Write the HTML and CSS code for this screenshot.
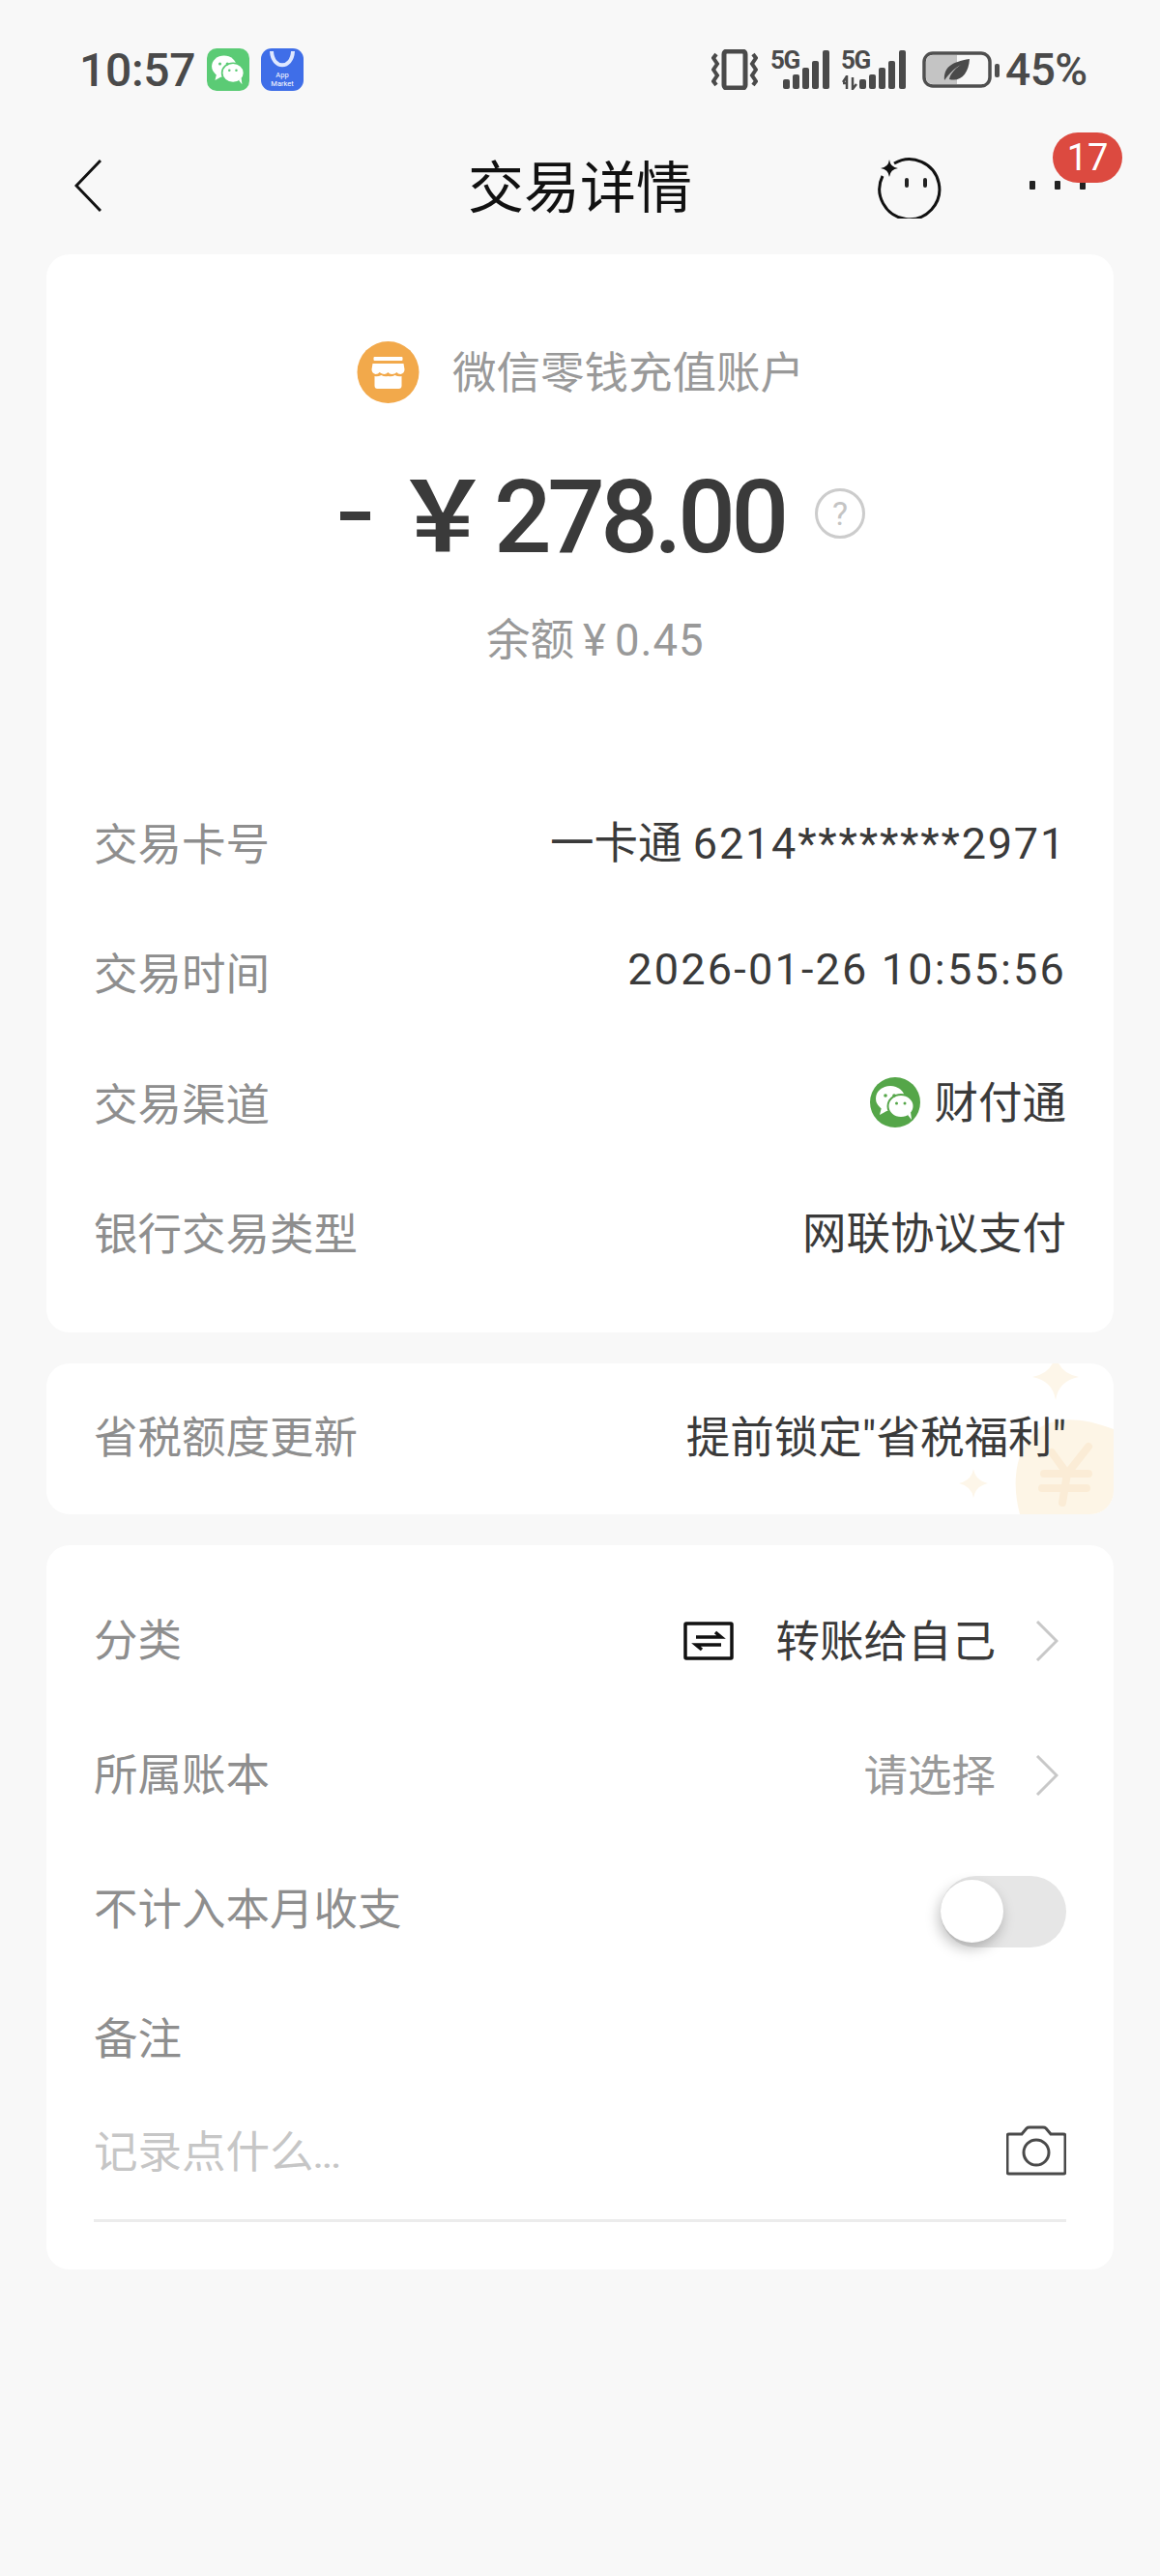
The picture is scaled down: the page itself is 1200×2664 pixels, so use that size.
FILE: index.html
```html
<!DOCTYPE html>
<html lang="zh-CN">
<head>
<meta charset="utf-8">
<title>交易详情</title>
<link rel="stylesheet" href="styles.css">
</head>
<body>
<svg class="defs" width="0" height="0" aria-hidden="true">
  <symbol id="wechat" viewBox="0 0 52 52">
    <ellipse cx="21" cy="22" rx="15" ry="13" fill="#fff"/>
    <path d="M12 31l-2 8 9-5z" fill="#fff"/>
    <ellipse cx="32" cy="30" rx="13.500" ry="12" fill="#fff" stroke="currentColor" stroke-width="2"/>
    <path d="M39 39l4 5-1-8z" fill="#fff"/>
    <circle cx="16" cy="19" r="1.800" fill="currentColor"/>
    <circle cx="25" cy="19" r="1.800" fill="currentColor"/>
    <circle cx="27.500" cy="27" r="1.500" fill="currentColor"/>
    <circle cx="36" cy="27" r="1.500" fill="currentColor"/>
  </symbol>
  <symbol id="signal" viewBox="0 0 48 40">
    <rect x="0" y="30" width="7" height="10" rx="2"/>
    <rect x="10" y="25" width="7" height="15" rx="2"/>
    <rect x="20" y="18" width="7" height="22" rx="2"/>
    <rect x="30" y="11" width="7" height="29" rx="2"/>
    <rect x="41" y="0" width="7" height="40" rx="2"/>
  </symbol>
  <symbol id="chevron" viewBox="0 0 24 42">
    <path d="M2 1l20 20L2 41" fill="none" stroke="#c8c8c8" stroke-width="3"/>
  </symbol>
</svg>

<div class="phone">
  <header class="status">
    <div class="status-left">
      <span class="time">10:57</span>
      <svg class="notif wechat-notif" viewBox="0 0 52 52"><rect width="52" height="52" rx="12" fill="#5bcb75"/><use href="#wechat" width="52" height="52"/></svg>
      <svg class="notif" viewBox="0 0 44 44"><rect width="44" height="44" rx="11" fill="#3f6ee8"/><path d="M11 3c1 19 21 19 22 0" fill="none" stroke="#dfe8ff" stroke-width="4"/><text x="22" y="30" class="mkt">App</text><text x="22" y="39" class="mkt">Market</text></svg>
    </div>
    <div class="status-right">
      <svg class="ico-vib" viewBox="0 0 48 42" fill="none" stroke="#4a4a4a"><rect x="13" y="2" width="22" height="38" rx="3" stroke-width="5"/><path d="M5 5L2 9l4 6-4 6 4 6-4 6 3 4M43 5l3 4-4 6 4 6-4 6 4 6-3 4" stroke-width="4"/></svg>
      <span class="net">
        <span class="net-5g">5G</span>
        <svg class="net-bars" viewBox="0 0 48 40" fill="#4a4a4a"><use href="#signal"/></svg>
      </span>
      <span class="net">
        <span class="net-5g">5G</span>
        <svg class="net-arrow" viewBox="0 0 16 16" fill="none" stroke="#4a4a4a" stroke-width="2.500"><path d="M5 1v14M1 8l4-6M1 9h5M11 3v12l4-5"/></svg>
        <svg class="net-bars" viewBox="0 0 48 40" fill="#4a4a4a"><use href="#signal"/></svg>
      </span>
      <svg class="battery" viewBox="0 0 80 38"><rect x="2" y="2" width="68" height="34" rx="9" fill="none" stroke="#4f4f4f" stroke-width="3.500"/><path d="M4 11q0-7 7-7h25v30H11q-7 0-7-7z" fill="#c4c4c4"/><rect x="75" y="13" width="5" height="14" rx="2" fill="#4f4f4f"/><path d="M23 30c-1-13 7-19 26-22-1 15-9 24-21 21 1-6 7-12 12-15-6 3-12 9-17 16z" fill="#4a4a4a"/></svg>
      <span class="pct">45%</span>
    </div>
  </header>

  <nav class="nav">
    <svg class="back" viewBox="0 0 28 54" fill="none" stroke="#111" stroke-width="3"><path d="M27 1L2 27l25 26"/></svg>
    <h1 class="title">交易详情</h1>
    <div class="nav-actions">
      <svg class="face" viewBox="0 0 68 68" fill="none"><path d="M17 11A31 31 0 1 1 5 24" stroke="#111" stroke-width="3"/><path d="M12 7q1 8 9 9-8 1-9 9-1-8-9-9 8-1 9-9z" fill="#111"/><rect x="28" y="26" width="4" height="10" rx="2" fill="#222"/><rect x="47" y="26" width="4" height="10" rx="2" fill="#222"/></svg>
      <div class="more">
        <i></i><i></i><i></i>
        <span class="badge">17</span>
      </div>
    </div>
  </nav>

  <main class="content">
    <section class="card card-main">
      <div class="account">
        <svg class="shop" viewBox="0 0 64 64"><circle cx="32" cy="32" r="32" fill="#f2a94b"/><rect x="17" y="16" width="30" height="4" rx="1" fill="#fff"/><path d="M16 23h32l1 6q0 4-4 5-3 0-4-2-2 2-5 2t-4-2q-2 2-4 2t-5-2q-1 2-4 2-4-1-4-5z" fill="#fff"/><path d="M18 36q3 1 7-1 3 2 7 1 4 1 7-1 4 2 7 1v10q0 3-3 3H21q-3 0-3-3z" fill="#fff"/></svg>
        <span class="account-name">微信零钱充值账户</span>
      </div>
      <div class="amount">
        <span class="minus"></span>
        <span class="yen">￥</span>
        <span class="figure">278.00</span>
        <span class="help">?</span>
      </div>
      <div class="balance">余额<span class="balance-yen">¥</span><span class="balance-num">0.45</span></div>
      <dl class="rows">
        <div class="row"><dt>交易卡号</dt><dd>一卡通 <span class="num">6214********2971</span></dd></div>
        <div class="row"><dt>交易时间</dt><dd class="num num-date">2026-01-26 10:55:56</dd></div>
        <div class="row"><dt>交易渠道</dt><dd class="channel"><svg class="channel-ico" viewBox="0 0 52 52"><circle cx="26" cy="26" r="26" fill="#55a649"/><use href="#wechat" class="channel-use" width="52" height="52"/></svg>财付通</dd></div>
        <div class="row"><dt>银行交易类型</dt><dd>网联协议支付</dd></div>
      </dl>
    </section>

    <section class="card card-tax">
      <svg class="tax-deco" viewBox="0 0 200 156"><path d="M92 14q3 20 24 24-21 4-24 24-3-20-24-24 21-4 24-24z" fill="#fdf6e9" transform="translate(48 -24)"/><path d="M7 108q2 12 15 15-13 3-15 15-2-12-15-15 13-3 15-15z" fill="#fdf6e9" transform="translate(48 1)"/><path d="M103 156c-8-30-6-62 14-84 14-15 42-20 83-4v88z" fill="#fdf5e6"/><path d="M136 92l16 22 22-28M128 114h46M126 129h46M152 114l-5 30" fill="none" stroke="#fbecd6" stroke-width="8" stroke-linecap="round"/></svg>
      <div class="row row-tax"><span class="label">省税额度更新</span><span class="value">提前锁定"省税福利"</span></div>
    </section>

    <section class="card card-form">
      <div class="row-form">
        <span class="label">分类</span>
        <span class="value-link"><svg class="transfer" viewBox="0 0 52 40" fill="none" stroke="#111"><rect x="2" y="2" width="48" height="36" rx="1" stroke-width="3.500"/><path d="M13 16h26l-6-5M39 24H13l6 5" stroke-width="3.500"/></svg><span class="link-text">转账给自己</span><svg class="chev"><use href="#chevron"/></svg></span>
      </div>
      <div class="row-form">
        <span class="label">所属账本</span>
        <span class="value-link"><span class="placeholder-value">请选择</span><svg class="chev"><use href="#chevron"/></svg></span>
      </div>
      <div class="row-form">
        <span class="label">不计入本月收支</span>
        <span class="toggle"><span class="thumb"></span></span>
      </div>
      <div class="note-title label">备注</div>
      <div class="note-input">
        <span class="note-ph">记录点什么<span class="note-dots">...</span></span>
        <svg class="camera" viewBox="0 0 62 52" fill="none" stroke="#4a4a4a" stroke-width="3"><path d="M3 9h13l5-6q1-1 3-1h14q2 0 3 1l5 6h13q2 0 2 2v37q0 2-2 2H3q-2 0-2-2V11q0-2 2-2z"/><circle cx="31" cy="28" r="13"/></svg>
      </div>
    </section>
  </main>
</div>
</body>
</html>
```
FILE: styles.css
```css
* { box-sizing: border-box; }
html, body { margin: 0; padding: 0; }
body {
  width: 1200px;
  height: 2664px;
  overflow: hidden;
  background: #f8f8f8;
  font-family: Roboto, "Noto Sans CJK SC", sans-serif;
  color: #3a3a3a;
}
.defs { position: absolute; }
.phone { display: flex; flex-direction: column; }

/* status bar */
.status {
  height: 132px;
  padding: 12px 75px 0 82px;
  display: flex;
  align-items: center;
  justify-content: space-between;
  color: #4a4a4a;
}
.status-left { display: flex; align-items: center; }
.time { font-size: 48px; font-weight: 500; width: 132px; letter-spacing: -.3px; }
.notif { width: 44px; height: 44px; display: block; color: #5bcb75; margin-right: 12px; }
.mkt { font: 7.500px Roboto, sans-serif; fill: #fff; text-anchor: middle; }
.status-right { display: flex; align-items: center; }
.ico-vib { width: 48px; height: 42px; margin-right: 13px; }
.net { display: inline-flex; position: relative; width: 61px; height: 42px; margin-right: 12px; justify-content: flex-end; }
.net + .net { width: 67px; margin-right: 17px; }
.net-5g { position: absolute; left: 0; top: -4px; font-size: 26px; font-weight: 700; letter-spacing: -1.500px; line-height: 30px; color: #4a4a4a; }
.net-bars { width: 48px; height: 40px; margin-top: 1px; }
.net-arrow { position: absolute; left: 1px; bottom: 0; width: 16px; height: 16px; }
.battery { width: 80px; height: 38px; margin-right: 6px; }
.pct { font-size: 46px; font-weight: 500; width: 85px; letter-spacing: -.5px; }

/* nav */
.nav {
  height: 120px;
  padding: 0 77px;
  display: grid;
  grid-template-columns: minmax(0, 1fr) auto minmax(0, 1fr);
  align-items: center;
}
.back { width: 28px; height: 54px; }
.title { margin: 6px 0 0; font-size: 58px; font-weight: 400; color: #111; line-height: 80px; }
.nav-actions { display: flex; align-items: center; justify-content: flex-end; }
.face { width: 68px; height: 68px; margin-right: 89px; }
.more { position: relative; width: 58px; height: 10px; display: flex; justify-content: space-between; }
.more i { width: 6px; height: 9px; background: #222; border-radius: 1px; }
.badge {
  position: absolute;
  left: 24px;
  top: -50px;
  width: 72px;
  height: 52px;
  border-radius: 26px;
  background: #dc4a40;
  color: #fff;
  font-size: 38px;
  line-height: 52px;
  text-align: center;
}

/* cards */
.content { padding: 11px 48px 0; display: flex; flex-direction: column; gap: 32px; }
.card { background: #fff; border-radius: 24px; }
.card-main { height: 1115px; padding: 90px 49px 0; }
.account { height: 64px; display: flex; align-items: center; padding-left: 272px; }
.shop { width: 65px; height: 64px; margin-right: 34px; }
.account-name { font-size: 45.500px; color: #999; margin-bottom: 6px; }
.amount { margin-top: 58px; height: 120px; display: flex; align-items: center; padding-left: 255px; color: #3a3a3a; }
.minus { width: 31px; height: 9px; background: #3a3a3a; margin-right: 25px; margin-top: -4px; }
.yen { font-size: 100px; font-weight: 700; width: 100px; margin: 0 3px 16px 0; line-height: 120px; font-family: "Noto Sans CJK SC", sans-serif; }
.figure { font-size: 105px; font-weight: 500; letter-spacing: -4.500px; width: 332px; }
.help {
  width: 52px;
  height: 52px;
  border: 3px solid #ccc;
  border-radius: 50%;
  color: #c4c4c4;
  font-size: 34px;
  line-height: 46px;
  text-align: center;
  margin-top: -8px;
}
.balance { margin-top: 38px; height: 60px; line-height: 60px; padding-left: 406px; font-size: 45.500px; color: #999; display: flex; }
.balance-yen { margin: 0 9px; }
.balance-num { letter-spacing: 1px; }
.rows { margin: 113px 0 0; }
.row { height: 134.500px; display: flex; align-items: center; justify-content: space-between; }
dt, .label { font-size: 45.500px; color: #8e8e8e; margin-bottom: 7px; }
dd { margin: 0 0 10px; font-size: 45.500px; color: #3a3a3a; }
.num { font-size: 45px; letter-spacing: 1.800px; }
.num-date { letter-spacing: 2.200px; }
.channel { display: flex; align-items: center; }
.channel-ico { width: 52px; height: 52px; margin: 6px 14px 0 0; color: #55a649; }

.card-tax { position: relative; height: 156px; padding: 0 49px; overflow: hidden; }
.tax-deco { position: absolute; right: 0; top: 0; width: 200px; height: 156px; }
.row-tax { position: relative; height: 156px; }
.row-tax > .label { margin-bottom: 10px; }
.value { font-size: 45.500px; color: #3a3a3a; margin-bottom: 10px; }

.card-form { height: 749px; padding: 29px 49px 0; }
.row-form { height: 139px; display: flex; align-items: center; justify-content: space-between; }
.value-link { display: flex; align-items: center; }
.transfer { width: 52px; height: 40px; margin-right: 43px; }
.link-text { font-size: 45.500px; color: #3a3a3a; margin-bottom: 5px; }
.placeholder-value { font-size: 45.500px; color: #999; margin-bottom: 5px; }
.chev { width: 24px; height: 42px; margin-left: 41px; margin-right: 8px; }
.toggle { position: relative; width: 130px; height: 74px; border-radius: 37px; background: #e6e6e6; margin-top: 5px; }
.thumb {
  position: absolute;
  left: 0;
  top: 4px;
  width: 65px;
  height: 65px;
  border-radius: 50%;
  background: #fff;
  box-shadow: -2px 6px 14px rgba(0, 0, 0, .25);
}
.note-title { margin-top: 34px; margin-bottom: 0; height: 64px; line-height: 64px; }
.note-input {
  margin-top: 47px;
  height: 109px;
  padding-bottom: 36px;
  border-bottom: 3px solid #ececec;
  display: flex;
  align-items: center;
  justify-content: space-between;
}
.note-ph { font-size: 45.500px; color: #c6c6c6; margin-bottom: 5px; }
.note-dots { font-size: 32px; font-weight: 700; }
.camera { width: 62px; height: 52px; }
```
